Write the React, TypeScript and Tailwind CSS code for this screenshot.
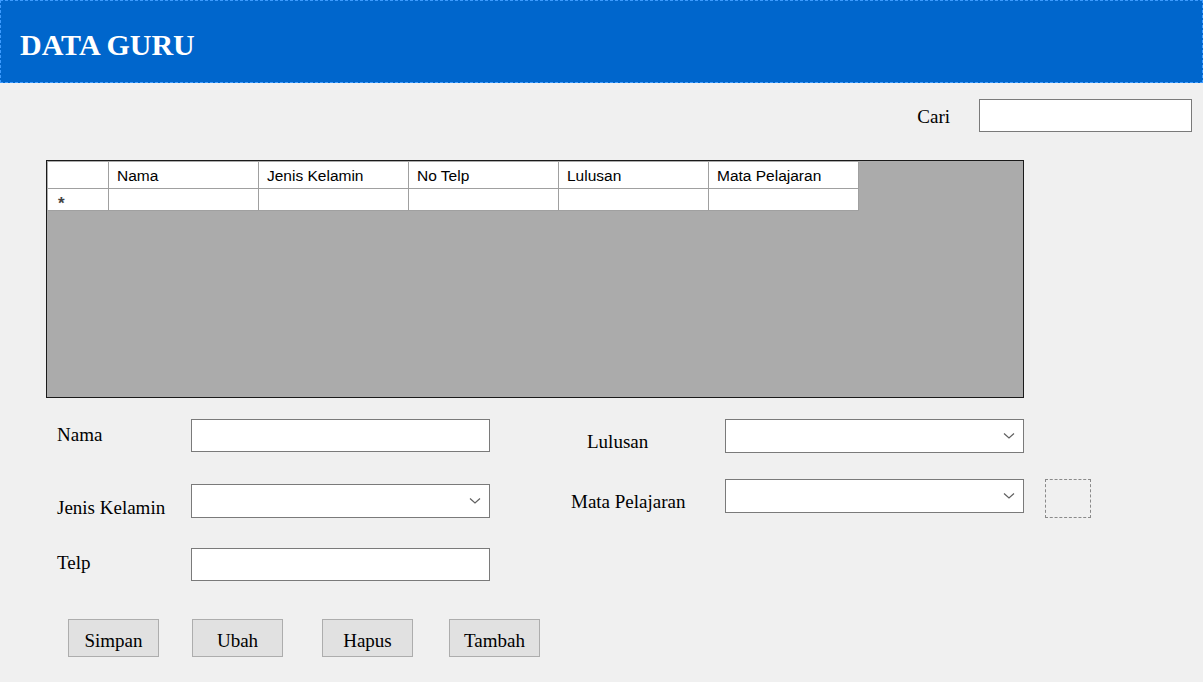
import React from "react";

const serif = { fontFamily: '"Liberation Serif", "Times New Roman", serif' };
const sans = { fontFamily: '"Liberation Sans", Arial, sans-serif' };

const columns = ["Nama", "Jenis Kelamin", "No Telp", "Lulusan", "Mata Pelajaran"];

function Chevron() {
  return (
    <svg width="12" height="8" viewBox="0 0 12 8" className="mr-[8px]">
      <polyline points="1,1.5 6,6 11,1.5" fill="none" stroke="#606060" strokeWidth="1.2" />
    </svg>
  );
}

function TextBox({ w }: { w: string }) {
  return <div className={`${w} h-[33px] shrink-0 border border-[#7a7a7a] bg-white`} />;
}

function ComboBox() {
  return (
    <div className="flex h-[34px] w-[299px] shrink-0 items-center justify-end border border-[#7a7a7a] bg-white">
      <Chevron />
    </div>
  );
}

function Button({ label, className }: { label: string; className: string }) {
  return (
    <button
      className={`${className} flex h-[38px] w-[91px] items-center justify-center border border-[#adadad] bg-[#e1e1e1] pt-[6px] text-[19px] text-black`}
    >
      {label}
    </button>
  );
}

export default function App() {
  return (
    <div className="h-[682px] w-[1203px] overflow-hidden bg-[#f0f0f0]" style={serif}>
      {/* Header */}
      <div className="flex h-[83px] items-center border border-dashed border-[#3d9bff] bg-[#0066cc] pl-[19px] pt-[6px]">
        <h1 className="text-[30px] font-bold text-white">DATA GURU</h1>
      </div>

      {/* Cari */}
      <div className="mt-[16px] flex items-center justify-end pr-[11px]">
        <span className="mr-[29px] pt-[4px] text-[19px] text-black">Cari</span>
        <TextBox w="w-[213px]" />
      </div>

      {/* Grid */}
      <div className="ml-[46px] mt-[28px] h-[238px] w-[978px] border border-[#1a1a1a] bg-[#ababab] p-px" style={sans}>
        <div className="flex h-[27px] w-fit bg-white">
          <div className="w-[61px] border-b border-r border-[#a0a0a0]" />
          {columns.map((c) => (
            <div
              key={c}
              className="flex w-[150px] items-center border-b border-r border-[#a0a0a0] pl-[8px] pt-[2px] text-[15.5px] text-black"
            >
              {c}
            </div>
          ))}
        </div>
        <div className="flex h-[22px] w-fit bg-white">
          <div className="flex w-[61px] items-start border-b border-r border-[#a0a0a0] pl-[10px] pt-[6px] text-[17px] font-bold leading-none text-[#444]">
            *
          </div>
          {columns.map((c) => (
            <div key={c} className="w-[150px] border-b border-r border-[#a0a0a0]" />
          ))}
        </div>
      </div>

      {/* Form */}
      <div className="mt-[21px] flex text-[19px] leading-[24px] text-black">
        <div className="ml-[57px] flex w-[433px] flex-col">
          <div className="flex h-[33px] items-start">
            <span className="w-[134px] pt-[4px]">Nama</span>
            <TextBox w="w-[299px]" />
          </div>
          <div className="mt-[32px] flex h-[34px] items-start">
            <span className="w-[134px] pt-[12px]">Jenis Kelamin</span>
            <ComboBox />
          </div>
          <div className="mt-[30px] flex h-[33px] items-start">
            <span className="w-[134px] pt-[3px]">Telp</span>
            <TextBox w="w-[299px]" />
          </div>
        </div>

        <div className="ml-[81px] flex flex-col">
          <div className="flex h-[34px] items-start">
            <span className="w-[154px] pl-[16px] pt-[11px]">Lulusan</span>
            <ComboBox />
          </div>
          <div className="mt-[26px] flex h-[34px] items-start">
            <span className="w-[154px] pt-[11px]">Mata Pelajaran</span>
            <ComboBox />
            <div className="ml-[21px] h-[39px] w-[46px] shrink-0 border border-dashed border-[#8a8a8a]" />
          </div>
        </div>
      </div>

      {/* Buttons */}
      <div className="mt-[38px] flex">
        <Button label="Simpan" className="ml-[68px]" />
        <Button label="Ubah" className="ml-[33px]" />
        <Button label="Hapus" className="ml-[39px]" />
        <Button label="Tambah" className="ml-[36px]" />
      </div>
    </div>
  );
}
